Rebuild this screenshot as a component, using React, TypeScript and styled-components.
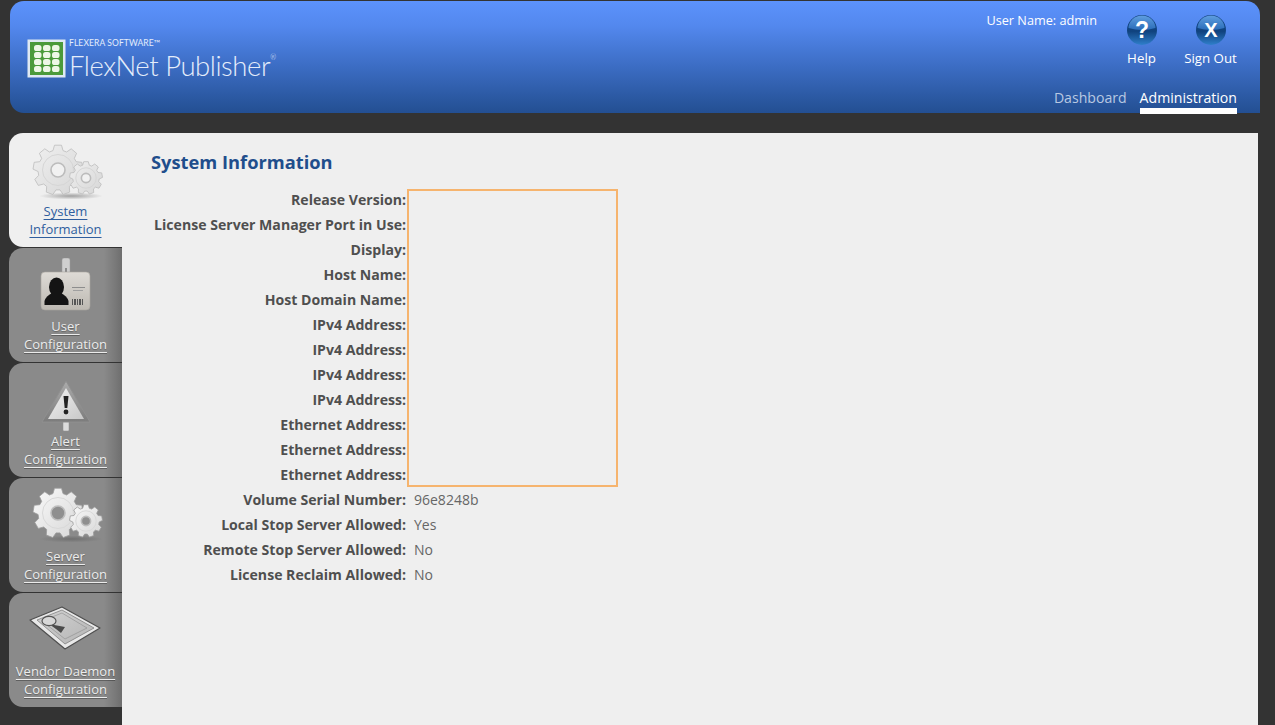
import React from "react";
import styled, { createGlobalStyle } from "styled-components";

const GlobalStyle = createGlobalStyle`
  html, body {
    margin: 0;
    padding: 0;
    height: 100%;
    background: #333333;
    overflow: hidden;
  }
  body {
    font-family: "Open Sans", "Noto Sans", sans-serif;
  }
`;

const Page = styled.div`
  width: 1275px;
  height: 725px;
  padding: 1px 15px 0 10px;
  box-sizing: border-box;
  display: flex;
  flex-direction: column;
  gap: 20px;
`;

const Header = styled.header`
  flex: 0 0 112px;
  min-height: 0;
  display: flex;
  justify-content: space-between;
  border-radius: 14px 14px 0 14px;
  background: linear-gradient(180deg, #5c92fc 0%, #5388ee 22%, #3c6dc4 58%, #234f92 100%);
`;

const Logo = styled.div`
  display: flex;
  align-items: flex-end;
  gap: 3px;
  padding: 38px 0 0 17px;
  height: 39px;
`;

const LogoText = styled.div`
  display: flex;
  flex-direction: column;
  color: #e4edfb;
  font-family: "Lato", sans-serif;
`;

const Vendor = styled.span`
  font-size: 8.5px;
  line-height: 9px;
  letter-spacing: 0.1px;
  margin-bottom: 5px;
`;

const Product = styled.span`
  font-size: 27.5px;
  line-height: 25px;
  font-weight: 300;
  letter-spacing: -0.45px;

  sup {
    font-size: 7px;
    line-height: 0;
    vertical-align: 16px;
  }
`;

const HeaderRight = styled.div`
  display: flex;
  flex-direction: column;
  align-items: flex-end;
  padding-right: 23px;
`;

const TopRow = styled.div`
  display: flex;
  align-items: flex-start;
  height: 87px;
`;

const UserName = styled.div`
  color: #fff;
  font-size: 12.7px;
  line-height: 18px;
  margin: 10px 10px 0 0;
`;

const IconLink = styled.a`
  width: 69px;
  display: flex;
  flex-direction: column;
  align-items: center;
  color: #fff;
  font-size: 13.3px;
  line-height: 18px;
  padding-top: 14px;

  svg {
    display: block;
    margin-bottom: 4px;
  }
`;

const IconLinks = styled.div`
  display: flex;
  margin-right: -8px;
`;

const Nav = styled.nav`
  display: flex;
  gap: 13px;
`;

const NavItem = styled.a<{ $active?: boolean }>`
  height: 20px;
  font-size: 14.1px;
  line-height: 20px;
  color: ${(p) => (p.$active ? "#ffffff" : "#b9c9e2")};
  border-bottom: ${(p) => (p.$active ? "6px solid #ffffff" : "6px solid transparent")};
  margin-bottom: -1px;
`;

const Body = styled.div`
  flex: 1;
  display: flex;
  min-height: 0;
`;

const Tabs = styled.div`
  flex: 0 0 113px;
  margin-left: -1px;
  display: flex;
  flex-direction: column;
  gap: 1px;
`;

const Tab = styled.a<{ $active?: boolean }>`
  height: 114px;
  display: flex;
  flex-direction: column;
  align-items: center;
  border-radius: 14px 0 0 14px;
  background: ${(p) =>
    p.$active
      ? "#efefef"
      : "linear-gradient(90deg, #8a8a8a 0%, #8a8a8a 84%, #7b7b7b 93%, #6e6e6e 100%)"};
  color: ${(p) => (p.$active ? "#2f5e9e" : "#ececec")};
  text-decoration: underline;
  text-underline-offset: 3px;
  text-decoration-thickness: 1px;
  text-shadow: ${(p) => (p.$active ? "none" : "0 1px 1px rgba(0, 0, 0, 0.3)")};
  font-size: 13px;
  line-height: 18px;
  text-align: center;
`;

const TabIcon = styled.div<{ $top: number }>`
  height: 69px;
  box-sizing: border-box;
  padding-top: ${(p) => p.$top}px;

  svg {
    display: block;
  }
`;

const Content = styled.main`
  flex: 1;
  position: relative;
  margin-right: 2px;
  background: #efefef;
  padding: 16px 0 0 29px;
`;

const Title = styled.h1`
  margin: 0 0 12px;
  font-size: 18.3px;
  line-height: 26px;
  font-weight: 700;
  color: #1f4e8c;
`;

const InfoGrid = styled.dl`
  margin: 0;
  display: grid;
  grid-template-columns: 255px auto;
  justify-content: start;
  grid-auto-rows: 25px;
  column-gap: 8px;
  font-size: 14px;
  line-height: 25px;
`;

const Label = styled.dt`
  font-size: 14.1px;
  font-weight: 700;
  text-align: right;
  white-space: nowrap;
  color: #4f4f4f;
`;

const Value = styled.dd`
  margin: 0;
  color: #666666;
`;

const RedactBox = styled.div`
  position: absolute;
  left: 285px;
  top: 56px;
  width: 207px;
  height: 294px;
  border: 2px solid #f6b46e;
`;

const gearPoints = (cx: number, cy: number, r: number, teeth: number) => {
  const pts: string[] = [];
  const step = (Math.PI * 2) / teeth;
  for (let i = 0; i < teeth; i++) {
    const a = i * step - Math.PI / 2;
    const seq: [number, number][] = [
      [-0.36, 0.8],
      [-0.2, 1],
      [0.2, 1],
      [0.36, 0.8],
    ];
    seq.forEach(([d, m]) => {
      const x = cx + Math.cos(a + d * step) * r * m;
      const y = cy + Math.sin(a + d * step) * r * m;
      pts.push(`${x.toFixed(1)},${y.toFixed(1)}`);
    });
  }
  return pts.join(" ");
};

const Gear = ({ cx, cy, r, teeth, id, pale }: { cx: number; cy: number; r: number; teeth: number; id: string; pale?: boolean }) => (
  <g>
    <polygon
      points={gearPoints(cx, cy, r, teeth)}
      fill={`url(#${id})`}
      stroke={pale ? "#bdbdbd" : "#9c9c9c"}
      strokeWidth="0.8"
      strokeLinejoin="round"
    />
    <circle cx={cx} cy={cy} r={r * 0.62} fill="none" stroke={pale ? "#d6d6d6" : "#d9d9d9"} strokeWidth="1" />
    <circle cx={cx} cy={cy} r={r * 0.28} fill={pale ? "#f1f1f1" : "#8f8f8f"} stroke={pale ? "#bcbcbc" : "#bdbdbd"} strokeWidth="1.6" />
  </g>
);

const GearsIcon = ({ id, pale }: { id: string; pale?: boolean }) => (
  <svg width="74" height="56" viewBox="0 0 74 56">
    <defs>
      <linearGradient id={id} x1="0" y1="0" x2="1" y2="1">
        <stop offset="0" stopColor={pale ? "#f0f0f0" : "#fafafa"} />
        <stop offset="1" stopColor={pale ? "#d6d6d6" : "#d6d6d6"} />
      </linearGradient>
      <radialGradient id={`${id}s`}>
        <stop offset="0" stopColor="#555" stopOpacity="0.5" />
        <stop offset="1" stopColor="#555" stopOpacity="0" />
      </radialGradient>
    </defs>
    <ellipse cx="42" cy="52" rx="32" ry="3.5" fill={`url(#${id}s)`} />
    <Gear cx={29} cy={26} r={25} teeth={9} id={id} pale={pale} />
    <Gear cx={57} cy={34} r={16.5} teeth={9} id={id} pale={pale} />
  </svg>
);

const BadgeIcon = () => (
  <svg width="52" height="54" viewBox="0 0 52 54">
    <defs>
      <linearGradient id="badge" x1="0" y1="0" x2="0" y2="1">
        <stop offset="0" stopColor="#dedbd6" />
        <stop offset="1" stopColor="#bdb9b2" />
      </linearGradient>
    </defs>
    <rect x="22" y="0" width="8" height="18" rx="2" fill="#cfcfcf" stroke="#9b9b9b" strokeWidth="0.5" />
    <rect x="25" y="10" width="2" height="4" fill="#8b8b8b" />
    <rect x="1" y="14" width="49" height="38" rx="4" fill="url(#badge)" stroke="#a9a69f" strokeWidth="0.6" />
    <ellipse cx="16.5" cy="29" rx="7.5" ry="9.5" fill="#141414" />
    <path d="M4.5 47 L4.5 43 Q6 38 12 35 L21 35 Q27 38 28.5 43 L28.5 47 Z" fill="#141414" />
    <rect x="32" y="29" width="13" height="1" fill="#8d8d8d" />
    <rect x="33" y="32" width="10" height="1" fill="#a0a0a0" />
    <path d="M32 41h1v6h-1zM34 41h2v6h-2zM37 41h1v6h-1zM39 41h2v6h-2zM42 41h1v6h-1z" fill="#555555" />
  </svg>
);

const AlertIcon = () => (
  <svg width="52" height="52" viewBox="0 0 52 52">
    <defs>
      <linearGradient id="alertfill" x1="0" y1="0" x2="1" y2="1">
        <stop offset="0" stopColor="#f2f2f2" />
        <stop offset="1" stopColor="#c8c8c8" />
      </linearGradient>
      <linearGradient id="alertedge" x1="0" y1="0" x2="0" y2="1">
        <stop offset="0" stopColor="#ababab" />
        <stop offset="1" stopColor="#7c7c7c" />
      </linearGradient>
    </defs>
    <rect x="23" y="41" width="6" height="10" rx="1" fill="#dcdcdc" stroke="#8e8e8e" strokeWidth="0.5" />
    <path d="M26 1 L50 42 L2 42 Z" fill="url(#alertedge)" stroke="#8f8f8f" strokeWidth="1" strokeLinejoin="round" />
    <path d="M26 8 L44 39 L8 39 Z" fill="url(#alertfill)" />
    <path d="M23.5 16 L28.5 16 L27.3 28 L24.7 28 Z" fill="#222222" />
    <circle cx="26" cy="32" r="2.4" fill="#222222" />
  </svg>
);

const CertIcon = () => (
  <svg width="74" height="46" viewBox="0 0 74 46">
    <defs>
      <linearGradient id="cert" x1="0" y1="0" x2="1" y2="1">
        <stop offset="0" stopColor="#d2d2d2" />
        <stop offset="1" stopColor="#b4b4b4" />
      </linearGradient>
    </defs>
    <path d="M1 14 L33 1 L71 22 L36 43 Z" fill="#e8e8e8" stroke="#4f4f4f" strokeWidth="1.2" strokeLinejoin="round" />
    <path d="M8 14 L33 4 L65 22 L36 38 Z" fill="url(#cert)" stroke="#747474" strokeWidth="0.7" />
    <path d="M13 15 L33 7 L58 22 L36 33 Z" fill="none" stroke="#8d8d8d" strokeWidth="0.6" />
    <path d="M20 18 L36 21 L32 27 L27 23 Z" fill="#4b4b4b" />
    <ellipse cx="20" cy="15" rx="7" ry="4.6" fill="#d8d8d8" stroke="#555" strokeWidth="1.2" />
  </svg>
);

const OrbIcon = ({ id, children }: { id: string; children: React.ReactNode }) => (
  <svg width="30" height="30" viewBox="0 0 30 30">
    <defs>
      <linearGradient id={id} x1="0" y1="0" x2="0" y2="1">
        <stop offset="0" stopColor="#0f3f7c" />
        <stop offset="0.55" stopColor="#10437f" />
        <stop offset="1" stopColor="#2f7fcb" />
      </linearGradient>
      <linearGradient id={`${id}h`} x1="0" y1="0" x2="0" y2="1">
        <stop offset="0" stopColor="#5f9ee0" />
        <stop offset="1" stopColor="#2a6cb8" />
      </linearGradient>
    </defs>
    <circle cx="15" cy="15" r="15" fill={`url(#${id})`} />
    <path d="M1.5 13 A13.5 12.5 0 0 1 28.5 13 Q15 17 1.5 13 Z" fill={`url(#${id}h)`} />
    {children}
  </svg>
);

const rows: [string, string][] = [
  ["Release Version:", ""],
  ["License Server Manager Port in Use:", ""],
  ["Display:", ""],
  ["Host Name:", ""],
  ["Host Domain Name:", ""],
  ["IPv4 Address:", ""],
  ["IPv4 Address:", ""],
  ["IPv4 Address:", ""],
  ["IPv4 Address:", ""],
  ["Ethernet Address:", ""],
  ["Ethernet Address:", ""],
  ["Ethernet Address:", ""],
  ["Volume Serial Number:", "96e8248b"],
  ["Local Stop Server Allowed:", "Yes"],
  ["Remote Stop Server Allowed:", "No"],
  ["License Reclaim Allowed:", "No"],
];

export default function App() {
  return (
    <>
      <GlobalStyle />
      <Page>
        <Header>
          <Logo>
            <svg width="39" height="39" viewBox="0 0 39 39">
              <rect x="0.5" y="0.5" width="38" height="38" fill="#dfe9f2" />
              <rect x="3" y="3" width="33" height="33" fill="#4b9a3a" />
              {[0, 1, 2].map((c) =>
                [0, 1, 2, 3].map((r) => (
                  <rect key={`${c}-${r}`} x={7 + c * 9} y={6 + r * 7} width="7.5" height="6" rx="2.6" fill="#eef7e6" />
                ))
              )}
            </svg>
            <LogoText>
              <Vendor>FLEXERA SOFTWARE™</Vendor>
              <Product>
                FlexNet Publisher<sup>®</sup>
              </Product>
            </LogoText>
          </Logo>
          <HeaderRight>
            <TopRow>
              <UserName>User Name: admin</UserName>
              <IconLinks>
                <IconLink>
                  <OrbIcon id="help">
                    <text x="15" y="23" textAnchor="middle" fill="#fff" fontSize="23" fontWeight="700" fontFamily="Liberation Sans">?</text>
                  </OrbIcon>
                  Help
                </IconLink>
                <IconLink>
                  <OrbIcon id="out">
                    <text x="15" y="22" textAnchor="middle" fill="#fff" fontSize="20" fontWeight="700" fontFamily="Liberation Sans">X</text>
                  </OrbIcon>
                  Sign Out
                </IconLink>
              </IconLinks>
            </TopRow>
            <Nav>
              <NavItem>Dashboard</NavItem>
              <NavItem $active>Administration</NavItem>
            </Nav>
          </HeaderRight>
        </Header>
        <Body>
          <Tabs>
            <Tab $active>
              <TabIcon $top={11}><GearsIcon id="g1" pale /></TabIcon>
              System<br />Information
            </Tab>
            <Tab>
              <TabIcon $top={10}><BadgeIcon /></TabIcon>
              User<br />Configuration
            </Tab>
            <Tab>
              <TabIcon $top={17}><AlertIcon /></TabIcon>
              Alert<br />Configuration
            </Tab>
            <Tab>
              <TabIcon $top={9}><GearsIcon id="g2" /></TabIcon>
              Server<br />Configuration
            </Tab>
            <Tab>
              <TabIcon $top={13}><CertIcon /></TabIcon>
              Vendor Daemon<br />Configuration
            </Tab>
          </Tabs>
          <Content>
            <Title>System Information</Title>
            <InfoGrid>
              {rows.map(([label, value], i) => (
                <React.Fragment key={i}>
                  <Label>{label}</Label>
                  <Value>{value}</Value>
                </React.Fragment>
              ))}
            </InfoGrid>
            <RedactBox />
          </Content>
        </Body>
      </Page>
    </>
  );
}
